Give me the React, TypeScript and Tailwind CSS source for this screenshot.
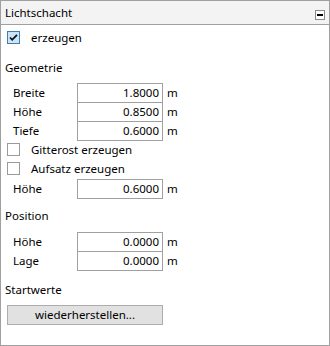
import React from 'react';

const font = { fontFamily: '"Noto Sans", "Open Sans", sans-serif' };

function CheckBox({ checked }: { checked?: boolean }) {
  if (checked) {
    return (
      <div className="w-[13px] h-[13px] shrink-0 border border-[#3c7fb1] bg-[#cce4f7] flex items-center justify-center">
        <svg width="11" height="11" viewBox="0 0 11 11">
          <polyline points="2,5.5 4.2,7.8 9,2.8" fill="none" stroke="#111" strokeWidth="1.8" />
        </svg>
      </div>
    );
  }
  return <div className="w-[13px] h-[13px] shrink-0 border border-[#9a9a9a] bg-white" />;
}

function CheckRow({ label, checked, className = '' }: { label: string; checked?: boolean; className?: string }) {
  return (
    <div className={`h-[19px] flex items-center pl-[6px] ${className}`}>
      <CheckBox checked={checked} />
      <span className="ml-[11px]">{label}</span>
    </div>
  );
}

function Heading({ text, className = '' }: { text: string; className?: string }) {
  return <div className={`h-[19px] flex items-center pl-[4px] ${className}`}>{text}</div>;
}

function NumRow({ label, value, className = '' }: { label: string; value: string; className?: string }) {
  return (
    <div className={`h-[20px] flex items-center pl-[12px] ${className}`}>
      <span className="w-[64px] shrink-0">{label}</span>
      <div className="w-[86px] h-[20px] border border-[#a0a0a0] bg-white flex items-center justify-end pr-[3px]">
        {value}
      </div>
      <span className="ml-[4px]">m</span>
    </div>
  );
}

export default function App() {
  return (
    <div
      className="w-[330px] h-[346px] border border-[#a0a0a0] bg-white flex flex-col text-[11.5px] text-black leading-none"
      style={font}
    >
      {/* Header */}
      <div className="h-[24px] shrink-0 bg-[#f3f3f3] border-b border-[#a0a0a0] flex items-center justify-between pl-[4px] pr-[4px]">
        <span className="text-[11.5px]">Lichtschacht</span>
        <div className="w-[10px] h-[10px] mt-[4px] border border-[#8c8c8c] bg-white flex items-center justify-center">
          <div className="w-[6px] h-[2px] bg-black" />
        </div>
      </div>

      <CheckRow label="erzeugen" checked className="mt-[3px]" />

      <Heading text="Geometrie" className="mt-[11px]" />
      <NumRow label="Breite" value="1.8000" className="mt-[6px]" />
      <NumRow label="Höhe" value="0.8500" className="-mt-px" />
      <NumRow label="Tiefe" value="0.6000" className="-mt-px" />

      <CheckRow label="Gitterost erzeugen" className="-mt-px" />
      <CheckRow label="Aufsatz erzeugen" />
      <NumRow label="Höhe" value="0.6000" className="mt-px" />

      <Heading text="Position" className="mt-[7px]" />
      <NumRow label="Höhe" value="0.0000" className="mt-[7px]" />
      <NumRow label="Lage" value="0.0000" className="-mt-px" />

      <Heading text="Startwerte" className="mt-[9px]" />
      <div className="pl-[6px] mt-[6px]">
        <button className="w-[156px] h-[20px] border border-[#adadad] bg-[#e1e1e1] flex items-center justify-center">
          wiederherstellen...
        </button>
      </div>
    </div>
  );
}
